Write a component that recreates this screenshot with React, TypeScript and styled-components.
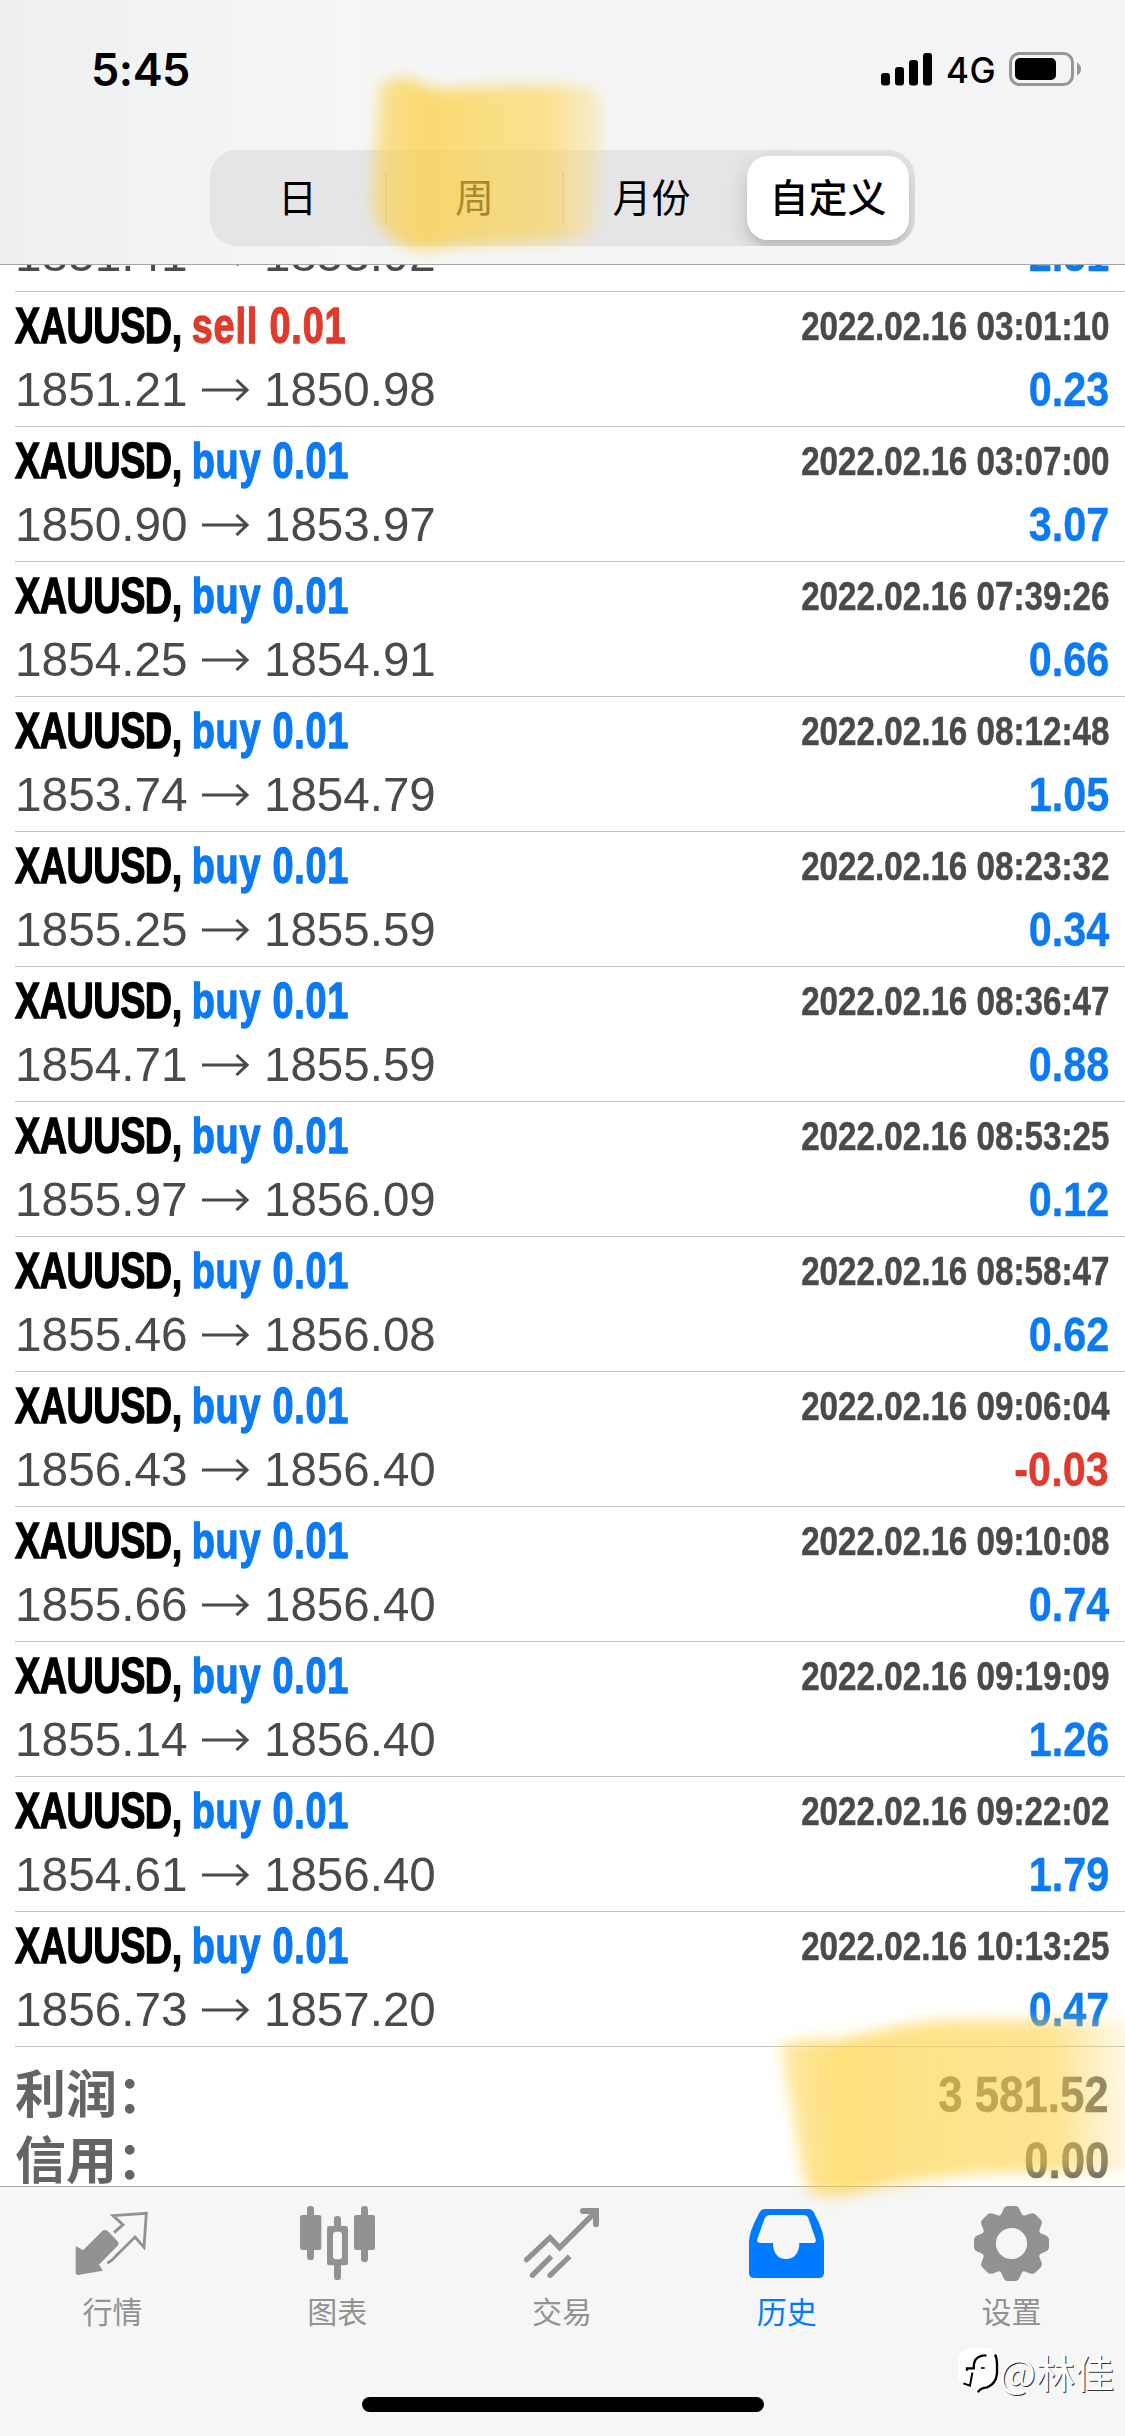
import React from 'react';
import styled, { createGlobalStyle } from 'styled-components';

const LATIN = '"Liberation Sans", Arial, sans-serif';
const CJK = '"Noto Sans CJK SC", "Liberation Sans", sans-serif';
const BLUE = '#0b7af3';
const RED = '#e03a2c';
const GREY = '#4a4a4d';

const GlobalStyle = createGlobalStyle`
  body { margin: 0; background: #fff; }
  * { box-sizing: border-box; }
`;

const Screen = styled.div`
  position: relative;
  width: 1125px;
  height: 2436px;
  overflow: hidden;
  display: flex;
  flex-direction: column;
  background: #fff;
  font-family: ${LATIN};
`;

const Header = styled.header`
  flex: none;
  height: 265px;
  display: flex;
  flex-direction: column;
  align-items: center;
  background: linear-gradient(90deg, #efefef 0, #f2f3f4 190px, #f5f6f7 340px, #f4f4f4 700px, #f4f5f7 1125px);
  border-bottom: 1px solid #a6a6a8;
`;

const StatusBar = styled.div`
  width: 100%;
  height: 150px;
  padding: 0 43px 12px 91px;
  display: flex;
  align-items: center;
  justify-content: space-between;
  color: #000;
`;

const Clock = styled.span`
  font: 600 45px/1 Inter, sans-serif;
  letter-spacing: -0.5px;
`;

const StatusIcons = styled.div`
  display: flex;
  align-items: center;
`;

const Network = styled.span`
  width: 75px;
  padding-left: 13px;
  padding-top: 3px;
  font: 450 35px/1 Inter, sans-serif;
  letter-spacing: 0.5px;
`;

const Segments = styled.nav`
  width: 705px;
  height: 96px;
  display: grid;
  grid-template-columns: 175px 177px 177px 176px;
  align-items: center;
  border-radius: 27px;
  background: #e5e5e8;
  overflow: hidden;
`;

const Segment = styled.button<{ $active?: boolean; $divider?: boolean }>`
  appearance: none;
  height: ${p => (p.$active ? 84 : 53)}px;
  margin: 0 ${p => (p.$active ? '6px 0 8px' : 0)};
  padding: 0 0 6px;
  border: 0;
  border-left: ${p => (p.$divider ? '2px solid #cfcfd2' : '0')};
  border-radius: ${p => (p.$active ? 21 : 0)}px;
  background: ${p => (p.$active ? '#fff' : 'transparent')};
  box-shadow: ${p => (p.$active ? '0 9px 22px rgba(0,0,0,.17), 0 6px 4px rgba(0,0,0,.05)' : 'none')};
  color: #000;
  font: ${p => (p.$active ? 500 : 400)} 39px/47px ${CJK};
  white-space: nowrap;
`;

const Content = styled.main`
  flex: none;
  height: 1921px;
  overflow: hidden;
`;

const List = styled.ul`
  margin: -108px 0 0;
  padding: 0 0 0 15px;
  list-style: none;
`;

const Row = styled.li`
  height: 135px;
  padding: 3px 16px 0 0;
  border-bottom: 1px solid #c2c2c4;
`;

const Line = styled.div`
  height: 63px;
  display: flex;
  align-items: center;
  justify-content: space-between;
`;

const Condensed = styled.span<{ $size: number; $x: number; $color: string; $end?: boolean; $stroke?: number; $weight?: number }>`
  display: inline-block;
  transform: scaleX(${p => p.$x});
  transform-origin: ${p => (p.$end ? 'right' : 'left')} center;
  font-size: ${p => p.$size}px;
  font-weight: ${p => p.$weight ?? 700};
  line-height: 63px;
  white-space: pre;
  color: ${p => p.$color};
  -webkit-text-stroke: ${p => p.$stroke ?? 0}px currentColor;
`;

const Ticker = styled.span`
  letter-spacing: -0.7px;
`;

const Side = styled.span<{ $sell?: boolean }>`
  color: ${p => (p.$sell ? RED : BLUE)};
  letter-spacing: ${p => (p.$sell ? 1.1 : 1)}px;
`;

const Prices = styled.div`
  display: grid;
  grid-template-columns: 187px 61.5px auto;
  align-items: center;
`;

const Totals = styled.section`
  padding: 15px 16px 0 15px;
`;

const TotalLine = styled.div`
  height: 66px;
  display: flex;
  align-items: center;
  justify-content: space-between;
`;

const TotalLabel = styled.span`
  padding-bottom: 9px;
  font: 700 51px/66px ${CJK};
  color: #646464;
`;

const TabBar = styled.footer`
  flex: 1;
  border-top: 1px solid #a8a8aa;
  background: #f6f6f6;
  display: flex;
  flex-direction: column;
  align-items: center;
`;

const Tabs = styled.div`
  width: 100%;
  height: 210px;
  padding-right: 1px;
  display: grid;
  grid-template-columns: repeat(5, 1fr);
`;

const Tab = styled.div<{ $active?: boolean }>`
  padding-top: 19px;
  display: flex;
  flex-direction: column;
  align-items: center;
  color: ${p => (p.$active ? '#007aff' : '#929292')};
  svg { display: block; }
`;

const TabLabel = styled.span`
  margin-top: 7px;
  font: 400 30px/44px ${CJK};
`;

const HomeIndicator = styled.div`
  width: 402px;
  height: 15px;
  border-radius: 8px;
  background: #000;
`;

const Overlay = styled.svg<{ $left: number; $top: number }>`
  position: absolute;
  left: ${p => p.$left}px;
  top: ${p => p.$top}px;
  pointer-events: none;
`;

const Watermark = styled.div`
  position: absolute;
  right: 11px;
  bottom: 38px;
  display: flex;
  align-items: center;
  color: #fdfdfd;
  font: 400 39px/54px ${CJK};
  text-shadow: 1px 1px 0.5px #333;
`;

const Handle = styled.span`
  margin-left: -4px;
`;

type Trade = [side: 'buy' | 'sell', open: string, close: string, time: string, profit: string];

const trades: Trade[] = [
  ['buy', '1851.41', '1853.92', '2022.02.16 02:58:31', '2.51'],
  ['sell', '1851.21', '1850.98', '2022.02.16 03:01:10', '0.23'],
  ['buy', '1850.90', '1853.97', '2022.02.16 03:07:00', '3.07'],
  ['buy', '1854.25', '1854.91', '2022.02.16 07:39:26', '0.66'],
  ['buy', '1853.74', '1854.79', '2022.02.16 08:12:48', '1.05'],
  ['buy', '1855.25', '1855.59', '2022.02.16 08:23:32', '0.34'],
  ['buy', '1854.71', '1855.59', '2022.02.16 08:36:47', '0.88'],
  ['buy', '1855.97', '1856.09', '2022.02.16 08:53:25', '0.12'],
  ['buy', '1855.46', '1856.08', '2022.02.16 08:58:47', '0.62'],
  ['buy', '1856.43', '1856.40', '2022.02.16 09:06:04', '-0.03'],
  ['buy', '1855.66', '1856.40', '2022.02.16 09:10:08', '0.74'],
  ['buy', '1855.14', '1856.40', '2022.02.16 09:19:09', '1.26'],
  ['buy', '1854.61', '1856.40', '2022.02.16 09:22:02', '1.79'],
  ['buy', '1856.73', '1857.20', '2022.02.16 10:13:25', '0.47'],
];

const Arrow = () => (
  <svg width="47" height="22" viewBox="0 0 47 22" fill="none" stroke={GREY} strokeWidth="3">
    <path d="M0 11H44.5M34.5 1L45 11L34.5 21" />
  </svg>
);

const TradeRow = ({ trade: [side, open, close, time, profit] }: { trade: Trade }) => (
  <Row>
    <Line>
      <Condensed $size={50} $x={0.757} $color="#000" $stroke={1.3}>
        <Ticker>XAUUSD, </Ticker>
        <Side $sell={side === 'sell'}>{side} 0.01</Side>
      </Condensed>
      <Condensed $size={40} $x={0.83} $color={GREY} $stroke={0.5} $end>{time}</Condensed>
    </Line>
    <Line>
      <Prices>
        <Condensed $size={48.5} $x={0.985} $color={GREY} $weight={400}>{open}</Condensed>
        <Arrow />
        <Condensed $size={48.5} $x={0.98} $color={GREY} $weight={400}>{close}</Condensed>
      </Prices>
      <Condensed $size={49} $x={0.845} $color={profit.startsWith('-') ? RED : BLUE} $stroke={0.4} $end>{profit}</Condensed>
    </Line>
  </Row>
);

const SignalIcon = () => (
  <svg width="52" height="33" viewBox="0 0 52 33">
    <rect x="0" y="20" width="9" height="12.5" rx="3" />
    <rect x="14" y="14" width="9" height="18.5" rx="3" />
    <rect x="28" y="7" width="9" height="25.5" rx="3" />
    <rect x="42" y="0" width="9" height="32.5" rx="3" />
  </svg>
);

const BatteryIcon = () => (
  <svg width="74" height="34" viewBox="0 0 74 34">
    <rect x="2.5" y="1.5" width="62" height="31" rx="9" fill="none" stroke="#969697" strokeWidth="3" />
    <rect x="7" y="6" width="41" height="22" rx="5" />
    <path d="M69 10.5Q73 12.5 73 17Q73 21.5 69 23.5Z" fill="#969697" />
  </svg>
);

const QuotesIcon = () => (
  <svg width="75" height="75" viewBox="223 108 225 225" fill="currentColor">
    <path d="M225 228L247 241L305 183Q313 177 321 183L350 213Q357 220 350 228L295 284L307 302L232 315Q225 315 225 308Z" />
    <path d="M340 188L367 164L337 137L437 130L430 232L403 201L345 259Q334 272 320 280" fill="none" stroke="currentColor" strokeWidth="8.5" />
  </svg>
);

const ChartIcon = () => (
  <svg width="75" height="75" viewBox="897 108 225 225" fill="currentColor">
    <rect x="897" y="135" width="64" height="105" rx="7" />
    <rect x="918" y="108" width="21" height="162" rx="10" />
    <rect x="1059" y="135" width="63" height="105" rx="7" />
    <rect x="1080" y="108" width="21" height="168" rx="10" />
    <rect x="978" y="168" width="63" height="118" rx="7" />
    <rect x="999" y="138" width="21" height="192" rx="10" />
    <rect x="996" y="185" width="27" height="83" rx="10" fill="#f8f8f8" />
  </svg>
);

const TradeIcon = () => (
  <svg width="75" height="75" viewBox="312 108 225 225" fill="none" stroke="currentColor" strokeWidth="16">
    <path d="M320 269L390 203L419 233L526 126" strokeLinecap="round" />
    <path d="M489 123H528V163" strokeWidth="18" strokeLinecap="round" />
    <path d="M337 316L394 259M390 316L449 259" />
    <circle cx="337" cy="316" r="8" fill="currentColor" stroke="none" />
    <circle cx="390" cy="316" r="8" fill="currentColor" stroke="none" />
  </svg>
);

const HistoryIcon = () => (
  <svg width="75" height="75" viewBox="987 108 225 225" fill="currentColor">
    <path
      fillRule="evenodd"
      d="M1035 117H1165Q1176 117 1182 128Q1212 185 1212 215V308Q1212 324 1196 324H1003Q987 324 987 308V215Q987 185 1018 128Q1024 117 1035 117ZM1050 135H1150Q1161 135 1165 145L1187 207Q1190 219 1178 219H1138C1138 250 1122 267 1098 267C1074 267 1059 250 1059 219H1022Q1008 219 1012 207L1033 148Q1038 135 1050 135Z"
    />
  </svg>
);

const SettingsIcon = () => (
  <svg width="75" height="75" viewBox="-113 -113 226 226">
    <circle r="69" fill="none" stroke="currentColor" strokeWidth="44" />
    {[0, 45, 90, 135, 180, 225, 270, 315].map(a => (
      <path
        key={a}
        transform={`rotate(${a})`}
        fill="currentColor"
        d="M-40 -80Q-32 -83 -28 -94Q-22 -113 -12 -113H12Q22 -113 28 -94Q32 -83 40 -80Z"
      />
    ))}
  </svg>
);

const WatermarkLogo = () => (
  <svg width="46" height="50" viewBox="36 36 138 150" fill="none" stroke="#000" strokeLinecap="butt">
    <path d="M80 42H122Q156 44 156 80V118Q154 150 126 161L100 172L104 160H72Q40 158 40 126V82Q42 44 80 42Z" fill="#fff" stroke="none" />
    <path d="M124 64Q100 64 91 78Q86 86 86 103H66V110" strokeWidth="7" />
    <path d="M82 116L75 155L55 148" strokeWidth="6" />
    <path d="M108 102H119" strokeWidth="5" />
    <path d="M150 62Q157 75 156 100V118Q153 150 126 160Q103 163 99 175" strokeWidth="7" />
  </svg>
);

const tabs: { label: string; Icon: React.FC; active?: boolean }[] = [
  { label: '行情', Icon: QuotesIcon },
  { label: '图表', Icon: ChartIcon },
  { label: '交易', Icon: TradeIcon },
  { label: '历史', Icon: HistoryIcon, active: true },
  { label: '设置', Icon: SettingsIcon },
];

const PeriodHighlight = () => (
  <Overlay $left={340} $top={40} width="300" height="240" viewBox="340 40 300 240">
    <defs>
      <filter id="soft1" x="-20%" y="-20%" width="140%" height="140%"><feGaussianBlur stdDeviation="7" /></filter>
      <linearGradient id="ink1" gradientUnits="userSpaceOnUse" x1="372" y1="0" x2="606" y2="0">
        <stop offset="0" stopColor="#fccf3e" stopOpacity=".5" />
        <stop offset=".22" stopColor="#fccf3e" stopOpacity=".73" />
        <stop offset=".5" stopColor="#fdd144" stopOpacity=".64" />
        <stop offset=".76" stopColor="#fdd144" stopOpacity=".58" />
        <stop offset="1" stopColor="#fddc70" stopOpacity=".25" />
      </linearGradient>
    </defs>
    <path
      d="M380 84Q400 74 415 80Q430 90 445 89Q520 83 590 87Q604 90 602 120L598 200Q596 232 585 240L450 246Q420 254 398 243Q374 228 371 205L375 150Z"
      fill="url(#ink1)"
      filter="url(#soft1)"
    />
  </Overlay>
);

const ProfitHighlight = () => (
  <Overlay $left={750} $top={1990} width="375" height="230" viewBox="750 1990 375 230">
    <defs>
      <filter id="soft2" x="-20%" y="-20%" width="140%" height="140%"><feGaussianBlur stdDeviation="7" /></filter>
      <linearGradient id="ink2" gradientUnits="userSpaceOnUse" x1="778" y1="2100" x2="1125" y2="2085">
        <stop offset="0" stopColor="#fdd144" stopOpacity=".45" />
        <stop offset=".17" stopColor="#fdd144" stopOpacity=".7" />
        <stop offset=".4" stopColor="#fdd144" stopOpacity=".63" />
        <stop offset=".8" stopColor="#fdd144" stopOpacity=".58" />
        <stop offset="1" stopColor="#fdd864" stopOpacity=".18" />
      </linearGradient>
    </defs>
    <path
      d="M780 2046Q790 2038 840 2040Q910 2022 950 2020L1145 2020V2172L990 2173Q920 2178 870 2190Q820 2202 808 2190Q800 2170 795 2130Z"
      fill="url(#ink2)"
      filter="url(#soft2)"
    />
  </Overlay>
);

export default function App() {
  return (
    <Screen>
      <GlobalStyle />
      <Header>
        <StatusBar>
          <Clock>5:45</Clock>
          <StatusIcons>
            <SignalIcon />
            <Network>4G</Network>
            <BatteryIcon />
          </StatusIcons>
        </StatusBar>
        <Segments>
          <Segment>日</Segment>
          <Segment $divider>周</Segment>
          <Segment $divider>月份</Segment>
          <Segment $active>自定义</Segment>
        </Segments>
      </Header>
      <Content>
        <List>
          {trades.map(t => (
            <TradeRow key={t[3]} trade={t} />
          ))}
        </List>
        <Totals>
          <TotalLine>
            <TotalLabel>利润：</TotalLabel>
            <Condensed $size={50} $x={0.875} $color="#666" $stroke={0.5} $end>3 581.52</Condensed>
          </TotalLine>
          <TotalLine>
            <TotalLabel>信用：</TotalLabel>
            <Condensed $size={50} $x={0.875} $color="#666" $stroke={0.5} $end>0.00</Condensed>
          </TotalLine>
        </Totals>
      </Content>
      <TabBar>
        <Tabs>
          {tabs.map(({ label, Icon, active }) => (
            <Tab key={label} $active={active}>
              <Icon />
              <TabLabel>{label}</TabLabel>
            </Tab>
          ))}
        </Tabs>
        <HomeIndicator />
      </TabBar>
      <PeriodHighlight />
      <ProfitHighlight />
      <Watermark>
        <WatermarkLogo />
        <Handle>@林佳</Handle>
      </Watermark>
    </Screen>
  );
}
